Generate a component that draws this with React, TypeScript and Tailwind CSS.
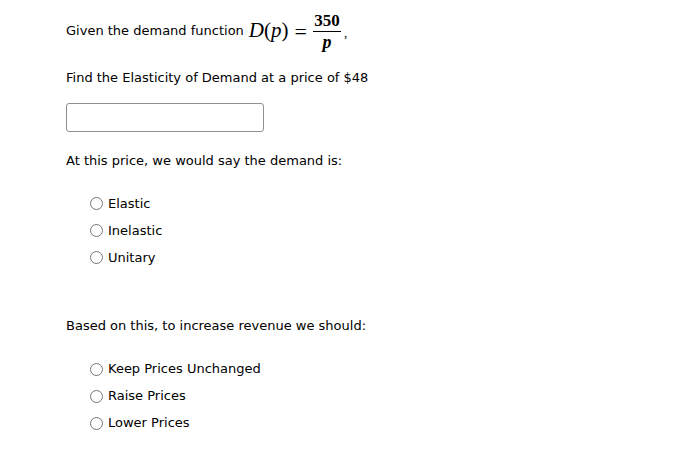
import React from "react";

const sans = { fontFamily: '"DejaVu Sans", Verdana, sans-serif' };

function Radio({ label }: { label: string }) {
  return (
    <label className="flex items-center h-[27px] text-[13px] text-black">
      <span className="w-[13px] h-[13px] rounded-full border border-[#767676] bg-white mr-[5px] shrink-0" />
      <span>{label}</span>
    </label>
  );
}

export default function App() {
  return (
    <div className="w-[697px] h-[454px] bg-white pl-[66px] text-[13px] text-black" style={sans}>
      <div className="flex items-center h-[60px] pt-[2px]">
        <span>Given the demand function</span>
        <span className="ml-[5px] flex items-center text-[21px]" style={{ fontFamily: '"Liberation Serif", serif' }}>
          <i>D</i>
          <span>(</span>
          <i>p</i>
          <span>)</span>
          <span className="ml-[6px] mr-[6px] text-[22px]">=</span>
          <span className="inline-flex flex-col items-center">
            <span className="text-[17px] font-bold leading-[20px]">350</span>
            <span className="w-[28px] border-t border-black" />
            <i className="text-[18px] leading-[20px] font-bold">p</i>
          </span>
          <span className="ml-[3px] text-[13px] mt-[4px]">,</span>
        </span>
      </div>
      <div className="mt-[8px]">Find the Elasticity of Demand at a price of $48</div>
      <input
        className="block mt-[15px] w-[198px] h-[29px] border border-[#8f8f8f] rounded-[3px] bg-white outline-none"
        type="text"
      />
      <div className="mt-[19px]">At this price, we would say the demand is:</div>
      <div className="mt-[20px] pl-[24px]">
        <Radio label="Elastic" />
        <Radio label="Inelastic" />
        <Radio label="Unitary" />
      </div>
      <div className="mt-[45px]">Based on this, to increase revenue we should:</div>
      <div className="mt-[20px] pl-[24px]">
        <Radio label="Keep Prices Unchanged" />
        <Radio label="Raise Prices" />
        <Radio label="Lower Prices" />
      </div>
    </div>
  );
}
